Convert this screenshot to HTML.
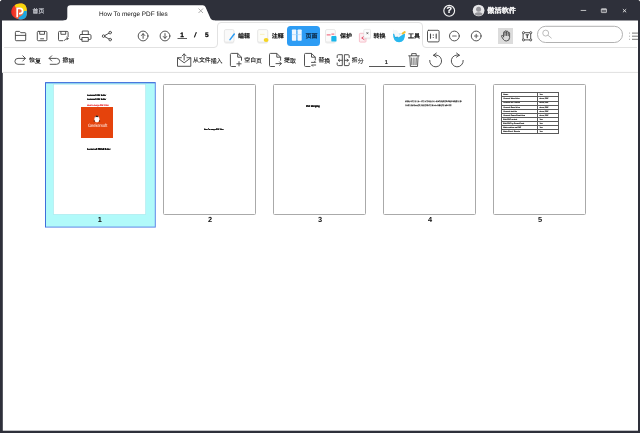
<!DOCTYPE html>
<html>
<head>
<meta charset="utf-8">
<title>How To merge PDF files</title>
<style>
html,body{margin:0;padding:0;}
body{width:640px;height:433px;overflow:hidden;background:#2e303a;position:relative;
  font-family:"Liberation Sans","Noto Sans CJK SC",sans-serif;color:#222;text-rendering:geometricPrecision;}
.abs{position:absolute;}
#main{position:absolute;left:2px;top:21px;width:636px;height:410px;background:#fff;}
#titlebar{position:absolute;left:0;top:0;width:640px;height:21px;background:#2e303a;}
.t{position:absolute;white-space:nowrap;line-height:1;}
#wrap{position:absolute;left:0;top:0;width:640px;height:433px;will-change:transform;}
.cjk{font-family:"Liberation Sans","Noto Sans CJK SC",sans-serif;}
svg{position:absolute;overflow:visible;}
.ic{fill:none;stroke:#4a4a4a;stroke-width:0.950;stroke-linecap:round;stroke-linejoin:round;}
.thumb{position:absolute;top:84px;width:93px;height:130.500px;background:#fff;border:1px solid #aaaaaa;border-radius:1.5px;box-sizing:border-box;}
.pn{position:absolute;width:20px;text-align:center;font-size:7.400px;font-weight:bold;color:#111;line-height:8px;}
.tiny{font-size:2.200px;font-weight:bold;color:#000;text-shadow:0 0 0.400px #000,0 0 0.400px #000;transform:scaleX(0.820);transform-origin:0 0;}
.tb{position:absolute;border-collapse:collapse;table-layout:fixed;width:58.200px;}
.tb td{border:1px solid #5a5a5a;height:2.190px;padding:0.900px 0 0 1.200px;font-size:1.850px;font-weight:bold;line-height:2.190px;vertical-align:top;text-shadow:0 0 0.400px #222;color:#222;white-space:nowrap;overflow:hidden;}
.tb td:first-child{width:34px;}
</style>
</head>
<body>
<div id="wrap">
<div id="titlebar"></div>
<svg class="abs" style="left:0;top:0" width="640" height="4"><circle cx="0" cy="0" r="1.300" fill="#f4f4f4"/><circle cx="640" cy="0" r="1.300" fill="#d8d8d8"/></svg>
<svg class="abs" style="left:0;top:0" width="640" height="433"><rect x="2" y="20.500" width="636" height="52" fill="#fff"/><rect x="2.800" y="72" width="635.200" height="358.700" fill="#fff"/></svg>

<!-- tab -->
<svg class="abs" style="left:0;top:0" width="640" height="24">
  <path d="M63.500 20.600 Q67.300 20.600 67.300 17 L67.300 8.500 Q67.300 5.300 70.500 5.300 L202.800 5.300 Q204.700 5.300 205.500 7 L210.200 17.800 Q211.400 20.600 214.800 20.600 L214.800 22 L63.500 22 Z" fill="#fff"/>
</svg>

<!-- logo -->
<svg class="abs" style="left:0;top:0" width="40" height="22">
  <defs>
    <clipPath id="lc"><path d="M20 3.400 C24.500 3.400 26.300 5.200 26.700 9.500 C27.200 14.500 26.500 17.500 24 18.800 C21.500 20 17.500 19.600 14.800 17.800 C12 16 10.800 13.500 11.400 10.500 C12.200 6.500 15.500 3.400 20 3.400Z"/></clipPath>
    <linearGradient id="lg1" x1="0" y1="0" x2="1" y2="0"><stop offset="0" stop-color="#f01a1a"/><stop offset="0.550" stop-color="#f4603a"/><stop offset="1" stop-color="#f6a25a"/></linearGradient>
  </defs>
  <g clip-path="url(#lc)">
    <rect x="10" y="2" width="18" height="19" fill="url(#lg1)"/>
    <path d="M14 2 L28 2 L28 11.500 L22.500 12 Q22 6.500 15.500 7.500 Z" fill="#f8d60c"/>
    <path d="M28 10.500 L28 21 L17.500 21 L19 17 Q23.500 15.500 24 11 Z" fill="#1aa6e2"/>
  </g>
  <path d="M17.200 17.300 L17.200 8.300 L19.800 8.300 Q22.600 8.300 22.600 11 Q22.600 13.600 19.800 13.600 L19 13.600" fill="none" stroke="#fff" stroke-width="1.700"/>
</svg>
<div class="t cjk" style="left:32px;top:10px;font-size:5.800px;color:#e2e4ec;-webkit-text-stroke:0.100px #e2e4ec;transform:translate(0.6px,0.1px) rotate(0.02deg);">首页</div>
<div class="t" id="ttl" style="left:99px;top:12px;font-size:6.400px;color:#111;transform:translate(0px,0px) rotate(0.02deg);">How To merge PDF files</div>
<svg class="abs" style="left:198px;top:8px" width="6" height="6"><path d="M0.5 0.5 L5 5 M5 0.5 L0.5 5" stroke="#888" stroke-width="0.7" fill="none"/></svg>

<!-- title right -->
<svg class="abs" style="left:443px;top:4px" width="14" height="14"><circle cx="6.200" cy="6.800" r="5.400" fill="none" stroke="#f4f4f4" stroke-width="1.150"/></svg>
<div class="t" style="left:446px;top:6px;font-size:9px;font-weight:bold;color:#fff;-webkit-text-stroke:0.200px #fff;transform:translate(0.6px,0.5px) rotate(0.02deg);">?</div>
<svg class="abs" style="left:0;top:0" width="640" height="20">
  <defs><clipPath id="uc"><circle cx="478.600" cy="10.500" r="5.300"/></clipPath></defs>
  <circle cx="478.600" cy="10.500" r="5.850" fill="#e6e6e8"/>
  <g clip-path="url(#uc)"><circle cx="478.600" cy="9.300" r="2.500" fill="#95959a"/><ellipse cx="478.600" cy="15.800" rx="4.600" ry="3.500" fill="#95959a"/></g>
</svg>
<div class="t" id="usr" style="left:487px;top:8px;font-size:7.2px;font-weight:bold;color:#fff;-webkit-text-stroke:0.350px #fff;font-family:'Liberation Serif','Noto Serif CJK SC',serif;transform:translate(0.3px,0.2px) rotate(0.02deg);">傲活软件</div>
<svg class="abs" style="left:0;top:0" width="640" height="20">
  <path d="M580.700 10.450 L586.200 10.450" stroke="#e4e4e4" stroke-width="0.800"/>
  <rect x="601.300" y="8.900" width="5.200" height="3.700" rx="0.500" fill="#686970" stroke="#d6d6d8" stroke-width="0.750"/>
  <path d="M601.300 9.200 L606.500 9.200" stroke="#d6d6d8" stroke-width="1"/>
  <path d="M622.900 9.100 L626.200 12.300 M626.200 9.100 L622.900 12.300" stroke="#f0f0f0" stroke-width="0.850"/>
</svg>

<!-- toolbar lines -->
<svg class="abs" style="left:0;top:0" width="640" height="80">
  <path d="M4 47.5 L214 47.5 Q217.5 47.5 217.5 44 L217.5 26 Q217.5 22.5 221 22.5 L419 22.5 Q422.5 22.5 422.5 26 L422.5 44 Q422.5 47.5 426 47.5 L637 47.5" fill="none" stroke="#e2e2e2" stroke-width="1"/>
  <path d="M2 72.400 L638 72.400" stroke="#e0e0e0" stroke-width="1"/>
</svg>

<!-- row1 icons left -->
<svg class="abs" style="left:0;top:0" width="220" height="48">
  <g class="ic">
    <!-- folder -->
    <path d="M15.4 32 Q15.4 31.4 16 31.4 L19.6 31.4 L20.8 32.7 L25 32.7 Q25.700 32.7 25.700 33.4 L25.700 40 Q25.700 40.700 25 40.700 L16.100 40.700 Q15.400 40.700 15.400 40 Z"/>
    <path d="M15.400 35.400 L25.700 35.400"/>
    <!-- save -->
    <rect x="37.300" y="31.400" width="9.600" height="9.300" rx="1"/>
    <path d="M39.700 31.600 L39.700 34.300 L44.500 34.300 L44.500 31.600 M40.600 38.800 L43.600 38.800"/>
    <!-- save as -->
    <path d="M68.100 36.600 L68.100 32.400 Q68.100 31.400 67.100 31.400 L59.500 31.400 Q58.500 31.400 58.500 32.400 L58.500 39.700 Q58.500 40.700 59.500 40.700 L62.700 40.700"/>
    <path d="M60.900 31.600 L60.900 34.300 L65.700 34.300 L65.700 31.600 M64.200 40.500 Q65.500 38.300 68 38.400 M66.700 37.200 L68.200 38.400 L66.900 39.800"/>
    <!-- printer -->
    <path d="M82.300 34.500 L82.300 31 L88.300 31 L88.300 34.500"/>
    <rect x="79.600" y="34.500" width="11.400" height="5" rx="1.200"/>
    <rect x="82.300" y="37.500" width="6" height="3.800" fill="#fff"/>
    <!-- share -->
    <circle cx="103.600" cy="36.100" r="1.300"/><circle cx="110.200" cy="32.600" r="1.300"/><circle cx="110.200" cy="39.600" r="1.300"/>
    <path d="M104.800 35.500 L109 33.200 M104.800 36.700 L109 39"/>
    <!-- up -->
    <circle cx="143.100" cy="36" r="4.900"/><path d="M143.100 38.400 L143.100 33.800 M141.400 35.500 L143.100 33.700 L144.800 35.500"/>
    <!-- down -->
    <circle cx="165" cy="36" r="4.900"/><path d="M165 33.600 L165 38.200 M163.300 36.500 L165 38.300 L166.700 36.500"/>
  </g>
  <path d="M177.500 38.500 L187 38.500" stroke="#333" stroke-width="0.8"/>
</svg>
<div class="t" style="left:180px;top:33px;font-size:6.500px;font-weight:bold;color:#000;-webkit-text-stroke:0.250px #000;transform:translate(0.3px,0.2px) rotate(0.02deg);">1</div>
<div class="t" style="left:194px;top:33px;font-size:6.500px;font-weight:bold;color:#000;-webkit-text-stroke:0.250px #000;font-style:italic;transform:translate(0.3px,0.2px) rotate(0.02deg);">/</div>
<div class="t" style="left:205px;top:33px;font-size:6.500px;font-weight:bold;color:#000;-webkit-text-stroke:0.250px #000;transform:translate(0px,0.2px) rotate(0.02deg);">5</div>

<!-- row1 mid tabs -->
<div class="abs" style="left:287px;top:25.700px;width:33.300px;height:20.500px;background:#2d9cf4;border-radius:3.500px;"></div>
<svg class="abs" style="left:0;top:0" width="640" height="48">
  <defs>
    <filter id="sh" x="-30%" y="-30%" width="160%" height="170%"><feDropShadow dx="0" dy="0.600" stdDeviation="0.700" flood-color="#000" flood-opacity="0.180"/></filter>
  </defs>
  <!-- edit icon -->
  <rect x="224.400" y="29.600" width="9.500" height="12.500" rx="1.400" fill="#fafafa" stroke="#e3e3e3" stroke-width="0.700" filter="url(#sh)"/>
  <path d="M230 39.600 L234.300 34" stroke="#2d9cf4" stroke-width="1.500" stroke-linecap="round"/>
  <!-- annotate icon -->
  <rect x="257.700" y="29.600" width="10" height="12.500" rx="1.400" fill="#fcfcf8" stroke="#e3e3e3" stroke-width="0.700" filter="url(#sh)"/>
  <path d="M260 34.400 L264.500 34.400" stroke="#f6eeb0" stroke-width="0.800"/>
  <ellipse cx="266.100" cy="40" rx="2.400" ry="1.900" fill="#f5d523"/>
  <!-- page icon -->
  <rect x="291.900" y="29.500" width="4.400" height="11.200" rx="0.700" fill="#eef7ff"/>
  <rect x="297.500" y="29.500" width="4.200" height="11.200" rx="0.700" fill="#eef7ff"/>
  <path d="M291.900 34.600 L301.700 34.600" stroke="#9fd2fb" stroke-width="0.600"/>
  <!-- protect icon -->
  <rect x="325.500" y="29.500" width="9.800" height="12.500" rx="1.500" fill="#fbfbfb" stroke="#e4e4e4" stroke-width="0.700" filter="url(#sh)"/>
  <path d="M326.700 34.900 L330.600 34.900 M331.400 34.100 L334.300 34.100" stroke="#f0566b" stroke-width="1"/>
  <rect x="331.300" y="36.100" width="5.200" height="5.500" rx="0.900" fill="#19b5ea"/>
  <!-- convert icon -->
  <rect x="359.400" y="33.300" width="6.600" height="8.800" rx="0.900" fill="#fdeef1" stroke="#f3a9b8" stroke-width="0.700"/>
  <path d="M364.600 35.900 L361.700 38 L364.400 39.800" stroke="#e9405e" stroke-width="0.900" fill="none"/>
  <rect x="363.900" y="29.400" width="6.600" height="8.500" rx="0.900" fill="#fcfcfc" stroke="#e2e2e2" stroke-width="0.600" filter="url(#sh)"/>
  <path d="M366.500 32.200 L368.300 34.200 M368.300 32.200 L366.500 34.200" stroke="#444" stroke-width="0.650"/>
  <!-- tool icon -->
  <path d="M393 33.800 L405.100 33.800 Q405.100 42.300 399 42.300 Q393 42.300 393 33.800Z" fill="#27b7ee"/>
  <path d="M392.700 29.800 L396.800 30.300 L400.400 36 L395.300 37 Z" fill="#f3f7fa" filter="url(#sh)"/>
  <path d="M398.600 36.200 L404.200 32.500" stroke="#eef5f9" stroke-width="2" stroke-linecap="round"/>
  <path d="M402.600 33.500 L404.700 32.100" stroke="#f0c030" stroke-width="2" stroke-linecap="round"/>
</svg>
<div class="t cjk" style="left:238px;top:34px;font-size:6px;font-weight:bold;color:#111;-webkit-text-stroke:0.150px #111;transform:translate(0px,0px) rotate(0.02deg);">编辑</div>
<div class="t cjk" style="left:271px;top:34px;font-size:6px;font-weight:bold;color:#111;-webkit-text-stroke:0.150px #111;transform:translate(0.7px,0px) rotate(0.02deg);">注释</div>
<div class="t cjk" style="left:305px;top:34px;font-size:6px;font-weight:bold;color:#0c2a46;-webkit-text-stroke:0.150px #0c2a46;transform:translate(0.5px,0px) rotate(0.02deg);">页面</div>
<div class="t cjk" style="left:340px;top:34px;font-size:6px;font-weight:bold;color:#111;-webkit-text-stroke:0.150px #111;transform:translate(0px,0px) rotate(0.02deg);">保护</div>
<div class="t cjk" style="left:373px;top:34px;font-size:6px;font-weight:bold;color:#111;-webkit-text-stroke:0.150px #111;transform:translate(0.5px,0px) rotate(0.02deg);">转换</div>
<div class="t cjk" style="left:408px;top:34px;font-size:6px;font-weight:bold;color:#111;-webkit-text-stroke:0.150px #111;transform:translate(0px,0px) rotate(0.02deg);">工具</div>

<!-- row1 right -->
<div class="abs" style="left:498.300px;top:28.200px;width:15px;height:15.800px;background:#dcdcdc;"></div>
<svg class="abs" style="left:0;top:0" width="640" height="48">
  <g class="ic">
    <rect x="427.500" y="30.300" width="11.600" height="11.600" rx="1.200"/>
    <path d="M430.500 34 L430.500 38.300 M436.200 34 L436.200 38.300" stroke-width="1.100"/>
    <path d="M433.350 34.600 L433.350 35.400 M433.350 36.900 L433.350 37.700" stroke-width="1.200" stroke-linecap="butt"/>
    <circle cx="454.400" cy="36" r="4.900"/><path d="M452.600 36 L456.200 36" stroke-width="1.100" stroke="#666"/>
    <circle cx="476.200" cy="36" r="4.900"/><path d="M474.500 36 L477.900 36 M476.200 34.300 L476.200 37.700" stroke-width="1.100" stroke="#666"/>
    <!-- hand -->
    <path d="M503.600 36.800 L503.600 32.400 Q503.600 31.700 504.300 31.700 Q505 31.700 505 32.400 L505 35.500 M505 32.400 L505 31.500 Q505 30.700 505.800 30.700 Q506.600 30.700 506.600 31.500 L506.600 35.500 M506.600 32 Q506.600 31.300 507.400 31.300 Q508.200 31.300 508.200 32.100 L508.200 35.700 M508.200 33 Q508.200 32.400 508.900 32.400 Q509.600 32.400 509.600 33.200 L509.600 37.500 Q509.600 41 506.300 41 Q504.300 41 503.200 39.200 L501.500 36.400 Q501.200 35.700 501.800 35.400 Q502.400 35.200 502.900 35.800 L503.600 36.800"/>
    <!-- text select -->
    <rect x="523.500" y="32.700" width="7.200" height="7.200"/>
  </g>
  <g fill="#fff" stroke="#444" stroke-width="0.900">
    <circle cx="523.500" cy="32.700" r="1.050"/><circle cx="530.700" cy="32.700" r="1.050"/><circle cx="523.500" cy="39.900" r="1.050"/><circle cx="530.700" cy="39.900" r="1.050"/>
  </g>
  <rect x="537.500" y="26.300" width="85" height="16.200" rx="8.100" fill="#fff" stroke="#a8a8a8" stroke-width="0.900"/>
  <circle cx="545.700" cy="33.100" r="2.950" fill="none" stroke="#b4b4b4" stroke-width="0.900"/>
  <path d="M547.900 35.200 L551.600 38.300" stroke="#b4b4b4" stroke-width="0.900"/>
  <path d="M632 33.100 L638 33.100 M632 36.200 L638 36.200 M632 39.300 L638 39.300" stroke="#777" stroke-width="1"/>
  <path d="M629.300 33.100 L629.900 33.100 M629.300 36.200 L629.900 36.200 M629.300 39.300 L629.900 39.300" stroke="#777" stroke-width="1"/>
</svg>
<div class="t" style="left:525px;top:35px;font-size:5px;font-weight:bold;color:#222;-webkit-text-stroke:0.300px #222;transform:translate(0.8px,0.2px) rotate(0.02deg);">T</div>

<!-- row2 -->
<svg class="abs" style="left:0;top:0" width="640" height="74">
  <g class="ic">
    <!-- redo -->
    <path d="M24.300 64.300 L18 64.300 Q14.900 64.300 14.900 61.300 Q14.900 58.400 18 58.400 L25.200 58.400 M22.800 55.800 L25.400 58.400 L22.800 61"/>
    <!-- undo -->
    <path d="M50.200 64.300 L56.500 64.300 Q59.600 64.300 59.600 61.300 Q59.600 58.400 56.500 58.400 L49.300 58.400 M51.700 55.800 L49.100 58.400 L51.700 61"/>
    <!-- insert from file -->
    <path d="M181.300 57.700 L177.500 57.700 L177.500 66.300 L190.800 66.300 L190.800 57.700 L187 57.700 M177.700 58 L184.150 62.800 L190.600 58 M184.150 60 L184.150 54 M182.200 55.900 L184.150 53.900 L186.100 55.900"/>
    <!-- blank page -->
    <path d="M235.500 66.500 L231.500 66.500 Q230.400 66.500 230.400 65.400 L230.400 54.500 Q230.400 53.400 231.500 53.400 L237.700 53.400 L241.500 57.200 L241.500 60.300 M237.700 53.600 L237.700 57.200 L241.300 57.200 M239 61.700 L239 65.900 M236.900 63.800 L241.100 63.800"/>
    <!-- extract -->
    <path d="M274.500 66.500 L270.600 66.500 Q269.500 66.500 269.500 65.400 L269.500 54.500 Q269.500 53.400 270.600 53.400 L276.800 53.400 L280.600 57.200 L280.600 60.300 M276.800 53.600 L276.800 57.200 L280.400 57.200 M276 63.600 L281.300 63.600 M279.600 61.900 L281.300 63.600 L279.600 65.300"/>
    <!-- replace -->
    <path d="M310 66.500 L305.600 66.500 Q304.500 66.500 304.500 65.400 L304.500 54.500 Q304.500 53.400 305.600 53.400 L311.500 53.400 L315.300 57.200 L315.300 60 M311.500 53.600 L311.500 57.200 L315.100 57.200 M311.500 62.400 L315.700 62.400 L314.500 61.200 M315.700 65 L311.500 65 L312.700 66.200"/>
    <!-- split -->
    <path d="M337.200 57.600 L337.200 55.800 Q337.200 54.700 338.300 54.700 L342.300 54.700 L342.300 65.600 L338.300 65.600 Q337.200 65.600 337.200 64.500 L337.200 63 M342.300 60.300 L338.400 60.300 M339.500 59.200 L338.200 60.300 L339.500 61.400 M349.200 57.600 L349.200 55.800 Q349.200 54.700 348.100 54.700 L344.400 54.700 L344.400 65.600 L348.100 65.600 Q349.200 65.600 349.200 64.500 L349.200 63 M344.400 60.300 L348.200 60.300 M347.100 59.200 L348.400 60.300 L347.100 61.400"/>
    <!-- trash -->
    <path d="M408.700 55.800 L419.200 55.800 M411.700 55.600 L411.700 53.600 L416.200 53.600 L416.200 55.600 M409.800 56.300 L410.400 66.500 L417.500 66.500 L418.100 56.300 M411.700 58 L411.900 64.800 M413.950 58 L413.950 64.800 M416.200 58 L416 64.800" stroke-width="0.900"/>
    <!-- rotate ccw -->
    <path d="M433.550 55.300 A5.950 5.950 0 1 1 429.700 60.400 M436.300 53.100 L433.500 55.200 L436.400 57.100"/>
    <!-- rotate cw -->
    <path d="M459.350 55.300 A5.950 5.950 0 1 0 463.200 60.400 M456.600 53.100 L459.400 55.200 L456.500 57.100"/>
  </g>
  <path d="M369 66.500 L405.200 66.500" stroke="#444" stroke-width="0.900"/>
</svg>
<div class="t cjk" style="left:29px;top:59px;font-size:5.9px;color:#111;-webkit-text-stroke:0.120px #111;transform:translate(0px,0.5px) rotate(0.02deg);">恢复</div>
<div class="t cjk" style="left:62px;top:59px;font-size:5.9px;color:#111;-webkit-text-stroke:0.120px #111;transform:translate(0.5px,0.5px) rotate(0.02deg);">撤销</div>
<div class="t cjk" style="left:193px;top:59px;font-size:5.9px;color:#111;-webkit-text-stroke:0.120px #111;transform:translate(0px,0.5px) rotate(0.02deg);">从文件插入</div>
<div class="t cjk" style="left:244px;top:59px;font-size:5.9px;color:#111;-webkit-text-stroke:0.120px #111;transform:translate(0.3px,0.5px) rotate(0.02deg);">空白页</div>
<div class="t cjk" style="left:284px;top:59px;font-size:5.9px;color:#111;-webkit-text-stroke:0.120px #111;transform:translate(0px,0.5px) rotate(0.02deg);">提取</div>
<div class="t cjk" style="left:318px;top:59px;font-size:5.9px;color:#111;-webkit-text-stroke:0.120px #111;transform:translate(0.4px,0.5px) rotate(0.02deg);">替换</div>
<div class="t cjk" style="left:351px;top:59px;font-size:5.9px;color:#111;-webkit-text-stroke:0.120px #111;transform:translate(0.8px,0.5px) rotate(0.02deg);">拆分</div>
<div class="t" style="left:384px;top:61px;font-size:5.6px;color:#111;-webkit-text-stroke:0.200px #111;transform:translate(0.8px,0.1px) rotate(0.02deg);">1</div>

<!-- thumbnails -->
<svg class="abs" style="left:0;top:0" width="200" height="240">
  <rect x="45.500" y="82.700" width="109.800" height="144.400" fill="#b1fafa" stroke="#5f88e8" stroke-width="1"/>
  <path d="M45.500 227.100 L45.500 82.700 L155.300 82.700" fill="none" stroke="#3f6fda" stroke-width="1"/>
  <rect x="53.500" y="84.200" width="92.200" height="130.200" fill="#fff" stroke="#a8e6ec" stroke-width="0.600"/>
</svg>
<div class="thumb" style="left:163px;"></div>
<div class="thumb" style="left:273px;"></div>
<div class="thumb" style="left:383px;"></div>
<div class="thumb" style="left:493px;"></div>
<div class="pn" style="left:89px;top:216px;transform:translate(0.8px,0.2px) rotate(0.02deg);">1</div>
<div class="pn" style="left:200px;top:216px;transform:translate(0px,0.2px) rotate(0.02deg);">2</div>
<div class="pn" style="left:310px;top:216px;transform:translate(0px,0.2px) rotate(0.02deg);">3</div>
<div class="pn" style="left:420px;top:216px;transform:translate(0px,0.2px) rotate(0.02deg);">4</div>
<div class="pn" style="left:530px;top:216px;transform:translate(0px,0.2px) rotate(0.02deg);">5</div>

<!-- page 1 content -->
<div class="t tiny" style="left:86.500px;top:94.600px;">Geekersoft PDF Editor</div>
<div class="t tiny" style="left:87.200px;top:98.900px;">Geekersoft PDF Editor</div>
<div class="t tiny" style="left:87.200px;top:104.700px;color:#e8262a;font-size:2.300px;text-shadow:0 0 0.400px #e8262a;">How to merge PDF Files</div>
<div class="abs" style="left:81.300px;top:107px;width:31.500px;height:30.800px;background:#e5430c;"></div>
<svg class="abs" style="left:92px;top:114px" width="10" height="10">
  <ellipse cx="4.900" cy="5.200" rx="2.500" ry="3.100" fill="#fff"/>
  <path d="M3.300 3.300 Q3.300 1.400 4.900 1.400 Q6.500 1.400 6.500 3.300 Q4.900 2.500 3.300 3.300Z" fill="#222"/>
  <path d="M2.500 6 Q1.800 6.800 2.300 8 M7.300 6 Q8 6.800 7.500 8" stroke="#222" stroke-width="0.600" fill="none"/>
</svg>
<svg class="abs" style="left:0;top:0;" width="200" height="140"><text x="88" y="126.700" font-size="4.700" fill="#fff" textLength="19.300" lengthAdjust="spacingAndGlyphs" transform="rotate(0.02 88 126)">Geekersoft</text></svg>
<div class="t tiny" style="left:87.200px;top:148.900px;font-size:2.380px;">Geekersoft PDF&amp;E Editor</div>

<!-- page 2..4 content -->
<div class="t tiny" style="left:204.400px;top:129px;font-size:2.100px;">How To merge PDF files</div>
<div class="t tiny" style="left:306.400px;top:105.500px;font-size:2.700px;">PDF Merging</div>
<div class="t tiny cjk" style="left:405.200px;top:102px;font-size:1.726px;color:#333;text-shadow:0 0 0.400px #333;">如何将多个文件合并为一个文件本文将为您介绍一种简单快捷的方法帮助您轻松完成合并操</div>
<div class="t tiny cjk" style="left:405.200px;top:105.600px;font-size:1.726px;color:#333;text-shadow:0 0 0.400px #333;">打开软件后点击页面选项卡然后选择从文件插入即可将其他文件添加到当前</div>

<!-- page 5 table -->
<table class="tb" style="left:501px;top:92.400px;"><tbody><tr><td>Name</td><td>Yes</td></tr><tr><td>Convert Word files</td><td>docx, PDF</td></tr><tr><td>Convert the Text to</td><td>docx, PDF</td></tr><tr><td>Convert Excel files</td><td>docx, PDF</td></tr><tr><td>Convert text file</td><td>docx, PDF</td></tr><tr><td>Convert PowerPoint files</td><td>docx, PDF</td></tr><tr><td>Edit PDF as text</td><td>Yes</td></tr><tr><td>Edit PDF by PowerPoint</td><td>Yes</td></tr><tr><td>Make outline as PDF</td><td>Yes</td></tr><tr><td>Make Excel Sheets</td><td>Yes</td></tr></tbody></table>

</div>
</body>
</html>
